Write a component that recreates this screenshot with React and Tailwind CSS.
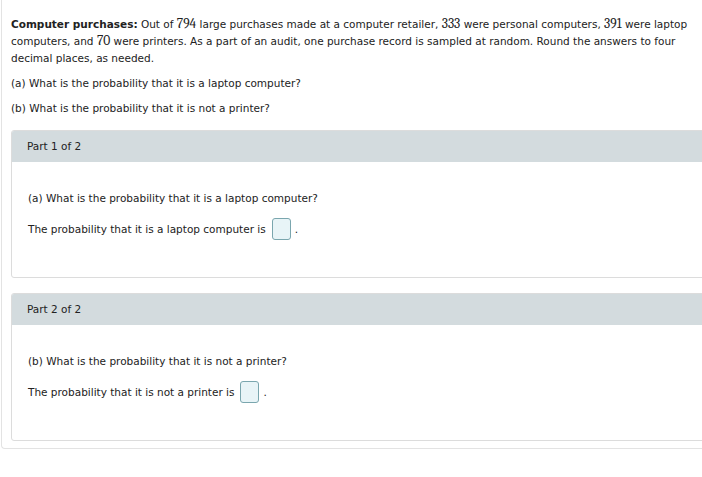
export default function App() {
  const Num = ({ children }) => (
    <span className="font-serif text-[13.5px] leading-[14px]">{children}</span>
  );
  const Input = () => (
    <span className="inline-block ml-[6px] mr-[4px] w-[19px] h-[22px] rounded-[3px] border border-[#7aa6ae] bg-[#e8f4f7]" />
  );
  return (
    <div className="w-[702px] h-[477px] bg-white overflow-hidden text-[#222] font-['DejaVu_Sans',sans-serif] text-[10.5px]">
      <div className="ml-[1px] w-[710px] h-[449px] border-l border-b border-[#e3e3e3] rounded-bl-[4px] pt-[16px] pl-[9px]">
        <p className="leading-[17px] w-[692px]">
          <b className="font-bold">Computer purchases:</b> Out of <Num>794</Num> large purchases made at a computer retailer, <Num>333</Num> were personal computers, <Num>391</Num> were laptop computers, and <Num>70</Num> were printers. As a part of an audit, one purchase record is sampled at random. Round the answers to four decimal places, as needed.
        </p>
        <p className="mt-[8px] leading-[17px]">(a) What is the probability that it is a laptop computer?</p>
        <p className="mt-[8px] leading-[17px]">(b) What is the probability that it is not a printer?</p>

        <div className="mt-[13px] w-[710px] h-[148px] border border-[#dcdcdc] rounded-[3px] overflow-hidden">
          <div className="h-[31px] bg-[#d3dbde] flex items-center pl-[15px]">Part 1 of 2</div>
          <div className="pl-[16px]">
            <p className="mt-[28px] leading-[17px]">(a) What is the probability that it is a laptop computer?</p>
            <p className="mt-[10px] leading-[24px] flex items-center">The probability that it is a laptop computer is<Input />.</p>
          </div>
        </div>

        <div className="mt-[15px] w-[710px] h-[148px] border border-[#dcdcdc] rounded-[3px] overflow-hidden">
          <div className="h-[31px] bg-[#d3dbde] flex items-center pl-[15px]">Part 2 of 2</div>
          <div className="pl-[16px]">
            <p className="mt-[28px] leading-[17px]">(b) What is the probability that it is not a printer?</p>
            <p className="mt-[10px] leading-[24px] flex items-center">The probability that it is not a printer is<Input />.</p>
          </div>
        </div>
      </div>
    </div>
  );
}
